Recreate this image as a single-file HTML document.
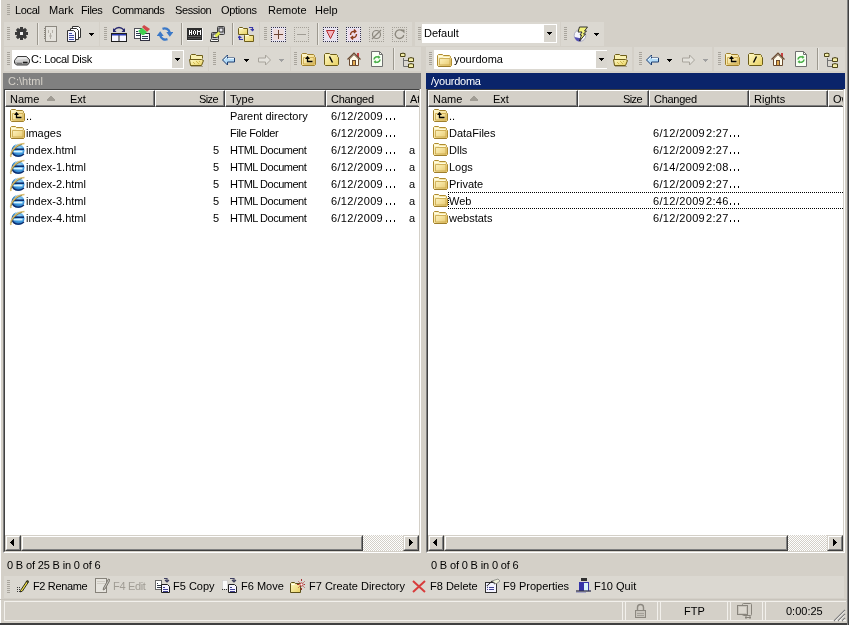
<!DOCTYPE html>
<html><head><meta charset="utf-8"><style>
html,body{margin:0;padding:0}
body{width:849px;height:625px;position:relative;overflow:hidden;background:#D4D0C8;font-family:"Liberation Sans",sans-serif;font-size:11px;color:#000}
body>div,body>svg{position:absolute}
.t{white-space:nowrap;line-height:13px;height:13px;will-change:transform}
</style></head><body>
<svg width="0" height="0" style="position:absolute;left:0;top:0">
<defs>
<linearGradient id="gfold" x1="0" y1="0" x2="1" y2="1"><stop offset="0" stop-color="#FFFBD8"/><stop offset="0.5" stop-color="#F6E4A0"/><stop offset="1" stop-color="#E4C468"/></linearGradient>
<linearGradient id="gfold2" x1="0" y1="0" x2="1" y2="1"><stop offset="0" stop-color="#FFFAC8"/><stop offset="1" stop-color="#E8D060"/></linearGradient>
<radialGradient id="gblue" cx="0.6" cy="0.35" r="0.7"><stop offset="0" stop-color="#9ED8FF"/><stop offset="0.6" stop-color="#3A96DA"/><stop offset="1" stop-color="#1A4C98"/></radialGradient>
<linearGradient id="ggray" x1="0" y1="0" x2="1" y2="1"><stop offset="0" stop-color="#F0F0F0"/><stop offset="1" stop-color="#707070"/></linearGradient>
</defs>
<symbol id="gear" viewBox="0 0 16 16">
<g fill="#3A3A3A" transform="translate(8.5 7.5)">
<circle r="5"/>
<rect x="-1.5" y="-6.5" width="3" height="13"/>
<rect x="-6.5" y="-1.5" width="13" height="3"/>
<rect x="-1.5" y="-6.5" width="3" height="13" transform="rotate(45)"/>
<rect x="-1.5" y="-6.5" width="3" height="13" transform="rotate(-45)"/>
</g>
<rect x="7" y="6" width="3" height="3" fill="#F0F0F0"/>
</symbol>
<symbol id="notebook" viewBox="0 0 16 16">
<rect x="3.5" y="0.5" width="11" height="15" fill="#E4E2DC" stroke="#8C8880"/>
<path d="M2 2.5h1M3 3.5h1M2 4.5h1M3 5.5h1M2 6.5h1M3 7.5h1M2 8.5h1M3 9.5h1M2 10.5h1M3 11.5h1M2 12.5h1M3 13.5h1" stroke="#8C8880"/>
<path d="M6.5 4v3M10.5 4v3M8.5 7v6M7 10h3" stroke="#B4B0A8" fill="none"/>
</symbol>
<symbol id="copydocs" viewBox="0 0 16 16">
<path d="M8.5 2.5h6l2 2v9h-8z" transform="translate(-1 -2)" fill="#fff" stroke="#333"/>
<path d="M5.5 2.5h6l2 2v9h-8z" fill="#fff" stroke="#333"/>
<path d="M2.5 4.5h6l2 2v9h-8z" fill="#F4F4FF" stroke="#333"/>
<path d="M4 9.5h5M4 11.5h5M4 13.5h5M4 7.5h3" stroke="#404CA8"/>
</symbol>
<symbol id="transfer" viewBox="0 0 16 16"><rect x="0.5" y="7.5" width="15" height="8" fill="#F6F6FF" stroke="#1E1E1E"/>
<path d="M8 7v9" stroke="#1E1E1E" stroke-width="1"/>
<rect x="1" y="8" width="14" height="1.5" fill="#2838B0"/>
<path d="M2 2v4h3.5z" fill="#26266E"/>
<path d="M14 2v4h-3.5z" fill="#26266E"/>
<path d="M3 4Q8 -1 13 4" stroke="#26266E" stroke-width="1.3" fill="none"/></symbol>
<symbol id="syncdoc" viewBox="0 0 16 16"><rect x="0.5" y="3.5" width="7" height="10" fill="#fff" stroke="#505058"/>
<path d="M2 6.5h2M2 8.5h4M2 10.5h4" stroke="#2C3C50"/>
<rect x="6.5" y="8.5" width="9" height="7" fill="#F8F8FF" stroke="#303040"/>
<path d="M8 11.5h6M8 13.5h6" stroke="#2C3C50"/>
<path d="M8 2l2-2 6 4-3 3z" fill="#D04848"/>
<path d="M4 6l4-3 5 4-3 3h-2z" fill="#40D050"/></symbol>
<symbol id="refresh" viewBox="0 0 16 16"><path d="M5.5 2.8C8.5 1.8 11.8 2.8 12.8 6.5" stroke="#3A78C8" stroke-width="2.3" fill="none"/>
<path d="M9.3 6h7l-3.5 4.8z" fill="#3A78C8"/>
<path d="M10.5 13.2C7.5 14.2 4.2 13.2 3.2 9.5" stroke="#3A78C8" stroke-width="2.3" fill="none"/>
<path d="M6.7 10h-7l3.5-4.8z" fill="#3A78C8"/></symbol>
<symbol id="hom" viewBox="0 0 16 16"><rect x="0" y="2" width="15" height="12" fill="#2C2C2C"/>
<path d="M0 14.5h16M15.5 2v13" stroke="#FAFAFA"/>
<g fill="#FFFFFF">
<rect x="2" y="4" width="1" height="5"/><rect x="4" y="4" width="1" height="5"/><rect x="3" y="6" width="1" height="1"/>
<rect x="6" y="5" width="1" height="3"/><rect x="8" y="5" width="1" height="3"/><rect x="7" y="4" width="1" height="1"/><rect x="7" y="8" width="1" height="1"/>
<rect x="10" y="4" width="1" height="5"/><rect x="13" y="4" width="1" height="5"/><rect x="11" y="5" width="1" height="1"/><rect x="12" y="5" width="1" height="1"/>
</g>
<rect x="1" y="10" width="13" height="1" fill="#5A5A5A"/><rect x="1" y="12" width="13" height="1" fill="#4A4A4A"/></symbol>
<symbol id="compkey" viewBox="0 0 16 16"><rect x="8.5" y="0.5" width="7" height="8" rx="1" fill="#C8C8D0" stroke="#3A3A3A"/>
<rect x="10" y="2" width="4" height="4" fill="#E8E8F0" stroke="#303030" stroke-width="1"/>
<rect x="2.5" y="6.5" width="7" height="7" rx="1" fill="#C8C8D0" stroke="#3A3A3A"/>
<rect x="4" y="8" width="4" height="3.5" fill="#E8E8F0" stroke="#303030" stroke-width="1"/>
<path d="M1.5 15.5h8M1.5 13.5v2M9.5 13.5v2" stroke="#3A3A3A" fill="none"/>
<rect x="2" y="14" width="7" height="1" fill="#F8F8F8"/>
<path d="M6.5 10.5l4-4" stroke="#E4EC50" stroke-width="2.6"/></symbol>
<symbol id="foldersync" viewBox="0 0 16 16"><path d="M0.5 8.5v-6l1-1h3l1 1h4v6z" fill="url(#gfold2)" stroke="#6C5C18"/>
<path d="M1.5 2.5h3" stroke="#FFFFF0"/>
<path d="M6.5 15.5v-6l1-1h3l1 1h4v6z" fill="url(#gfold2)" stroke="#6C5C18"/>
<path d="M7.5 9.5h3" stroke="#FFFFF0"/>
<path d="M11 1.5h3.5v2" stroke="#3838A8" stroke-width="1.2" fill="none"/><path d="M12 3h5l-2.5 2.5z" fill="#3838A8"/>
<path d="M5 13.5H1.5v-2" stroke="#3838A8" stroke-width="1.2" fill="none"/><path d="M-1 12h5l-2.5-2.5z" fill="#3838A8"/></symbol>
<symbol id="dotbox" viewBox="0 0 16 16"><rect x="1" y="1" width="15" height="15" fill="#E8E4F0"/><rect x="1" y="1" width="1" height="1" fill="#33334A"/><rect x="1" y="3" width="1" height="1" fill="#33334A"/><rect x="1" y="5" width="1" height="1" fill="#33334A"/><rect x="1" y="7" width="1" height="1" fill="#33334A"/><rect x="1" y="9" width="1" height="1" fill="#33334A"/><rect x="1" y="11" width="1" height="1" fill="#33334A"/><rect x="1" y="13" width="1" height="1" fill="#33334A"/><rect x="1" y="15" width="1" height="1" fill="#33334A"/><rect x="3" y="1" width="1" height="1" fill="#33334A"/><rect x="3" y="15" width="1" height="1" fill="#33334A"/><rect x="5" y="1" width="1" height="1" fill="#33334A"/><rect x="5" y="15" width="1" height="1" fill="#33334A"/><rect x="7" y="1" width="1" height="1" fill="#33334A"/><rect x="7" y="15" width="1" height="1" fill="#33334A"/><rect x="9" y="1" width="1" height="1" fill="#33334A"/><rect x="9" y="15" width="1" height="1" fill="#33334A"/><rect x="11" y="1" width="1" height="1" fill="#33334A"/><rect x="11" y="15" width="1" height="1" fill="#33334A"/><rect x="13" y="1" width="1" height="1" fill="#33334A"/><rect x="13" y="15" width="1" height="1" fill="#33334A"/><rect x="15" y="1" width="1" height="1" fill="#33334A"/><rect x="15" y="3" width="1" height="1" fill="#33334A"/><rect x="15" y="5" width="1" height="1" fill="#33334A"/><rect x="15" y="7" width="1" height="1" fill="#33334A"/><rect x="15" y="9" width="1" height="1" fill="#33334A"/><rect x="15" y="11" width="1" height="1" fill="#33334A"/><rect x="15" y="13" width="1" height="1" fill="#33334A"/><rect x="15" y="15" width="1" height="1" fill="#33334A"/></symbol>
<symbol id="dotboxg" viewBox="0 0 16 16"><rect x="1" y="1" width="1" height="1" fill="#A4A098"/><rect x="1" y="3" width="1" height="1" fill="#A4A098"/><rect x="1" y="5" width="1" height="1" fill="#A4A098"/><rect x="1" y="7" width="1" height="1" fill="#A4A098"/><rect x="1" y="9" width="1" height="1" fill="#A4A098"/><rect x="1" y="11" width="1" height="1" fill="#A4A098"/><rect x="1" y="13" width="1" height="1" fill="#A4A098"/><rect x="1" y="15" width="1" height="1" fill="#A4A098"/><rect x="3" y="1" width="1" height="1" fill="#A4A098"/><rect x="3" y="15" width="1" height="1" fill="#A4A098"/><rect x="5" y="1" width="1" height="1" fill="#A4A098"/><rect x="5" y="15" width="1" height="1" fill="#A4A098"/><rect x="7" y="1" width="1" height="1" fill="#A4A098"/><rect x="7" y="15" width="1" height="1" fill="#A4A098"/><rect x="9" y="1" width="1" height="1" fill="#A4A098"/><rect x="9" y="15" width="1" height="1" fill="#A4A098"/><rect x="11" y="1" width="1" height="1" fill="#A4A098"/><rect x="11" y="15" width="1" height="1" fill="#A4A098"/><rect x="13" y="1" width="1" height="1" fill="#A4A098"/><rect x="13" y="15" width="1" height="1" fill="#A4A098"/><rect x="15" y="1" width="1" height="1" fill="#A4A098"/><rect x="15" y="3" width="1" height="1" fill="#A4A098"/><rect x="15" y="5" width="1" height="1" fill="#A4A098"/><rect x="15" y="7" width="1" height="1" fill="#A4A098"/><rect x="15" y="9" width="1" height="1" fill="#A4A098"/><rect x="15" y="11" width="1" height="1" fill="#A4A098"/><rect x="15" y="13" width="1" height="1" fill="#A4A098"/><rect x="15" y="15" width="1" height="1" fill="#A4A098"/></symbol>
<symbol id="plus" viewBox="0 0 16 16"><use href="#dotbox"/><rect x="3" y="3" width="11" height="11" fill="#EEDCDC"/><path d="M4 8.5h9M8.5 4v9" stroke="#6E4434" stroke-width="1"/></symbol>
<symbol id="minus" viewBox="0 0 16 16"><use href="#dotboxg"/><path d="M4 8.5h9" stroke="#A09C94" stroke-width="1"/></symbol>
<symbol id="funnel" viewBox="0 0 16 16"><use href="#dotbox"/><path d="M4.5 4.5h8l-4 8z" fill="#F4B4C0" stroke="#B42C2C"/></symbol>
<symbol id="syncred" viewBox="0 0 16 16"><use href="#dotbox"/><rect x="3" y="3" width="11" height="11" fill="#F0DCEC"/><path d="M5.5 9C5.5 6 7.5 5 9.5 5.5M9 3.5l1.8 2-2 1.5M11.5 8C11.5 11 9.5 12 7.5 11.5M8 13.5l-1.8-2 2-1.5" stroke="#8C3C1C" stroke-width="1.4" fill="none"/></symbol>
<symbol id="nullsym" viewBox="0 0 16 16"><use href="#dotboxg"/><circle cx="8.5" cy="8.5" r="4" stroke="#8C887E" fill="none" stroke-width="1.2"/><path d="M4 13l9-9" stroke="#8C887E" stroke-width="1.2"/></symbol>
<symbol id="refreshgray" viewBox="0 0 16 16"><use href="#dotboxg"/><path d="M11.5 5A4.3 4.3 0 1 0 12.8 9" stroke="#8C887E" fill="none" stroke-width="1.3"/><path d="M9.5 3.5h4v4z" fill="#8C887E"/></symbol>
<symbol id="lightning" viewBox="0 0 16 16">
<circle cx="8" cy="9.5" r="5.8" fill="#F4F4FA" stroke="#A0A0B8" stroke-width="0.8"/>
<path d="M2.5 11a6 6 0 0 0 6 4.5l1-3z" fill="#5450B4"/>
<path d="M7.5 1h8l-3 4h2l-3 3h2l-6 7 2-6H8l2-3H6z" fill="#F2F27C" stroke="#202020" stroke-width="0.9" stroke-linejoin="round"/>
</symbol>
<symbol id="drive" viewBox="0 0 16 16"><path d="M0.5 10.5l3-4h9l3 3v3l-2 2.5h-11l-2-2z" fill="#A8A8A8" stroke="#3C3C3C"/>
<path d="M1.5 10l2.5-3h8l2.5 2.5z" fill="#E8E8E8"/>
<path d="M1 11h14" stroke="#F4F4F4"/>
<path d="M9 12.5h4.5" stroke="#1C1C1C" stroke-width="1.6"/>
<path d="M3 13.5h5" stroke="#707070"/></symbol>
<symbol id="folder" viewBox="0 0 16 16">
<path d="M1.5 13.5v-10l1-1h4l1 1h6l1 1v1l1 1v7l-1 1h-12z" fill="url(#gfold)" stroke="#B08C30"/>
<path d="M2.5 4.5h4l1 1h6" stroke="#FFFCE0" fill="none"/>
<path d="M3.5 6.5h10.5v6.5h-10.5z" fill="none" stroke="#C8A448" stroke-width="0.8"/>
<path d="M2 14.5h13" stroke="#8C7028" stroke-opacity="0.5"/>
</symbol>
<symbol id="openfolder" viewBox="0 0 16 16">
<path d="M2.5 14.5v-10l1-1h4l1 1h6v3" fill="#F8F0B0" stroke="#6C5C18"/>
<path d="M1.5 8.5h12l2 1-2 5h-11z" fill="url(#gfold2)" stroke="#6C5C18"/>
<path d="M3 15.5h12" stroke="#8C8060" stroke-opacity="0.6"/>
<path d="M5 11l2 2M8 10l3 3M11 10l1 1" stroke="#C8B040" stroke-width="0.8"/>
</symbol>
<symbol id="upfolder" viewBox="0 0 16 16">
<path d="M1.5 13.5v-10l1-1h4l1 1h6l1 1v1l1 1v7l-1 1h-12z" fill="url(#gfold)" stroke="#A0802C"/>
<path d="M3.5 6.5h10.5v6.5h-10.5z" fill="none" stroke="#C8A448" stroke-width="0.8"/>
<path d="M7.5 5.5v5h5" stroke="#000" stroke-width="1.3" fill="none"/>
<path d="M5 8l2.5-3 2.5 3z" fill="#000"/>
</symbol>
<symbol id="rootfolder" viewBox="0 0 16 16">
<path d="M1.5 13.5v-10l1-1h4l1 1h6l1 1v1l1 1v7l-1 1h-12z" fill="url(#gfold2)" stroke="#6C5C18"/>
<path d="M6.5 5.5l3 6" stroke="#000" stroke-width="1.4"/>
</symbol>
<symbol id="rootfolder2" viewBox="0 0 16 16"><path d="M1.5 13.5v-10l1-1h4l1 1h6l1 1v1l1 1v7l-1 1h-12z" fill="url(#gfold2)" stroke="#6C5C18"/><path d="M9.5 5.5l-3 6" stroke="#000" stroke-width="1.4"/></symbol>
<symbol id="home" viewBox="0 0 16 16"><rect x="11" y="2" width="2" height="4" fill="#C84040"/>
<path d="M1.5 8.5l6.5-6.5 6.5 6.5" stroke="#6A4A30" stroke-width="1.2" fill="none"/>
<path d="M3.5 8v6.5h9V8L8 3.5z" fill="#FFFBEA" stroke="#6A4A30"/>
<rect x="6.5" y="9.5" width="3" height="5" fill="#E4AC50" stroke="#6A4A30"/></symbol>
<symbol id="refreshdoc" viewBox="0 0 16 16">
<path d="M2.5 0.5h8l3 3v12h-11z" fill="#F8FFF4" stroke="#707070"/>
<path d="M10.5 0.5v3h3" stroke="#707070" fill="none"/>
<path d="M5 8.5a3 3 0 0 1 5-2M11 8.5a3 3 0 0 1-5 2" stroke="#48B048" stroke-width="1.6" fill="none"/>
<path d="M9 4.5l2.5 1.5-2 2zM7 12.5l-2.5-1.5 2-2z" fill="#48B048"/>
</symbol>
<symbol id="tree" viewBox="0 0 16 16"><path d="M1.5 1.5h2v-0.5h1v0.5h1.5v3h-4.5z" fill="#F4EEA8" stroke="#4C4418"/>
<path d="M9.5 6h2v-0.5h1v0.5h2v3.5h-5z" fill="#F4EEA8" stroke="#4C4418"/>
<path d="M9.5 12h2v-0.5h1v0.5h2v3.5h-5z" fill="#F4EEA8" stroke="#4C4418"/>
<path d="M4.5 6v8.5h4.5M4.5 8.5h4.5" stroke="#707070" fill="none"/></symbol>
<symbol id="back" viewBox="0 0 16 16">
<path d="M1.5 9l5-5v3h7v4h-7v3z" fill="#B4DCF8" stroke="#1C3C70" stroke-linejoin="miter"/>
<path d="M3 9l3.5-3.5M7 7.5h6" stroke="#E8F6FF"/>
</symbol>
<symbol id="fwd" viewBox="0 0 16 16">
<path d="M14.5 9l-5-5v3h-7v4h7v3z" fill="#E4E2DC" stroke="#A8A49C"/>
</symbol>
<symbol id="ie" viewBox="0 0 16 16"><circle cx="9" cy="8.5" r="6.5" fill="url(#gblue)"/>
<path d="M3.5 7.2h11.5" stroke="#0C2C6C" stroke-width="1.6"/>
<path d="M4.5 9.6h9" stroke="#D8F4FF" stroke-width="1.6"/>
<path d="M3.5 10.5c1 4 8 5 11.5 1.5" stroke="#0C2C6C" stroke-width="1.1" fill="none"/>
<path d="M6 3.5c2-2 6-2 8 1" stroke="#CDEBFF" stroke-width="1" fill="none"/>
<path d="M2 15C0.5 11 6 2 15.5 1.5" stroke="#D8BC70" stroke-width="1.7" fill="none"/>
<path d="M2.3 12.8C3 9 8 3.5 13 2.5" stroke="#7A6420" stroke-width="0.6" fill="none"/></symbol>
<symbol id="pencil" viewBox="0 0 16 16">
<path d="M4.5 13.5l6-9 1.5-1 0.5 1.5-6 9-2 1z" fill="#F2E040" stroke="#303020" stroke-linejoin="round"/>
<path d="M10 4l2 1.3" stroke="#303020" stroke-width="1.4"/>
<path d="M1 11h1M3 11h1M1 13h1M3 13h1M1 15h1M3 15h1" stroke="#383838" transform="translate(0 -0.5)"/>
</symbol>
<symbol id="editdoc" viewBox="0 0 16 16">
<rect x="1.5" y="1.5" width="11" height="14" fill="#E6E4DE" stroke="#86827A"/>
<path d="M3 4.5h8M3 6.5h8" stroke="#D0CCC4"/>
<path d="M9.5 11l5-9 1.5 1-5 9-1.8 1z" fill="#C8C6C0" stroke="#7A766E"/>
</symbol>
<symbol id="copydoc2" viewBox="0 0 16 16">
<rect x="1.5" y="3.5" width="6" height="9" fill="#fff" stroke="#6A6A6A"/>
<path d="M3 6.5h1M3 8.5h4M3 10.5h4" stroke="#303848"/>
<path d="M7.5 7.5h6l2 2v6h-8z" fill="#F6F4FF" stroke="#1E1E1E"/>
<path d="M9 10.5h2M9 12.5h5M9 14.5h5" stroke="#404090"/>
<path d="M10 1.5h3M13 1v3M11 3l2 2 2-2" stroke="#404060" stroke-width="1.2" fill="none"/>
</symbol>
<symbol id="movedoc" viewBox="0 0 16 16">
<path d="M1.5 3.5h5v9h-5z" fill="#FAFAFA" stroke="#C0C0C0" stroke-dasharray="1 1"/>
<path d="M1 12.5h1M3 12.5h1M5 12.5h1" stroke="#303030"/>
<path d="M7.5 7.5h6l2 2v6h-8z" fill="#F6F4FF" stroke="#1E1E1E"/>
<path d="M9 10.5h2M9 12.5h5M9 14.5h5" stroke="#404090"/>
<path d="M9 1.5h4M13 1v3M11 3l2 2 2-2" stroke="#404060" stroke-width="1.2" fill="none"/>
</symbol>
<symbol id="newdir" viewBox="0 0 16 16">
<path d="M1.5 15.5v-9l1-1h3l1 1h5v9z" fill="url(#gfold2)" stroke="#5C5018"/>
<path d="M2.5 7.5h3" stroke="#FFFFF0"/>
<path d="M12.5 2v2M12.5 11v2M8 7.5h2M15 7.5h2M9.5 4.5l1 1M15.5 4.5l-1 1M9.5 10.5l1-1M15.5 10.5l-1-1" stroke="#A83030" stroke-width="1"/>
<circle cx="12.5" cy="7.5" r="1.6" fill="#FFF0F0" stroke="#B83838" stroke-width="1"/>
</symbol>
<symbol id="delx" viewBox="0 0 16 16">
<path d="M2 4l12 11M14 4L2 15" stroke="#D83C3C" stroke-width="2"/>
</symbol>
<symbol id="props" viewBox="0 0 16 16">
<rect x="1.5" y="5.5" width="11" height="10" fill="#F4F4FF" stroke="#303030"/>
<path d="M3 10.5h1M5 10.5h5M3 12.5h1M5 12.5h5" stroke="#404090"/>
<path d="M3 9l5-5 3 3" stroke="#202020" stroke-width="1.2" fill="none" stroke-dasharray="1 0.5"/>
<path d="M8 4l6-2 2 2-4 3z" fill="#EEF0D8" stroke="#606060" stroke-width="0.6"/>
</symbol>
<symbol id="quit" viewBox="0 0 16 16">
<rect x="6" y="1" width="6" height="3" fill="#303030"/>
<rect x="4" y="5" width="10" height="9" fill="#3434A8"/>
<rect x="9" y="6" width="4" height="8" fill="#D8F4FA"/>
<path d="M1 14h16" stroke="#303050" stroke-width="1.3"/>
<path d="M1 15.5h10" stroke="#A8A8C8"/>
</symbol>
<symbol id="lock" viewBox="0 0 16 16"><path d="M5.5 8V5.5a3 3 0 0 1 6 0V8" stroke="#8C8880" stroke-width="1.4" fill="none"/><rect x="3.5" y="8.5" width="10" height="7" fill="#C8C4BC" stroke="#8C8880"/><path d="M5 11.5h7M5 13.5h7" stroke="#A4A098"/></symbol>
<symbol id="computer" viewBox="0 0 16 16">
<rect x="5.5" y="0.5" width="9" height="12" rx="1" fill="#D4D0C8" stroke="#88847C"/>
<rect x="0.5" y="2.5" width="10" height="9" fill="#C8C4BC" stroke="#88847C"/>
<rect x="2" y="4" width="7" height="6" fill="#DCD8D0"/>
<path d="M8 14.5h6M9 13v3M13 13v3" stroke="#88847C"/>
</symbol>
</svg>

<div style="left:0px;top:0px;width:1px;height:625px;background:#FFFFFF"></div>
<div style="left:7px;top:4px;width:3px;height:1px;background:#A8A49C"></div>
<div style="left:7px;top:6px;width:3px;height:1px;background:#A8A49C"></div>
<div style="left:7px;top:8px;width:3px;height:1px;background:#A8A49C"></div>
<div style="left:7px;top:10px;width:3px;height:1px;background:#A8A49C"></div>
<div style="left:7px;top:12px;width:3px;height:1px;background:#A8A49C"></div>
<div style="left:7px;top:14px;width:3px;height:1px;background:#A8A49C"></div>
<div class="t" style="left:15px;top:4px;letter-spacing:-0.35px;">Local</div>
<div class="t" style="left:49px;top:4px;">Mark</div>
<div class="t" style="left:81px;top:4px;letter-spacing:-0.35px;">Files</div>
<div class="t" style="left:112px;top:4px;letter-spacing:-0.5px;">Commands</div>
<div class="t" style="left:175px;top:4px;letter-spacing:-0.4px;">Session</div>
<div class="t" style="left:221px;top:4px;letter-spacing:-0.33px;">Options</div>
<div class="t" style="left:268px;top:4px;">Remote</div>
<div class="t" style="left:315px;top:4px;">Help</div>
<div style="left:4px;top:22px;width:95px;height:24px;background:#DBD8D1;"></div>
<div style="left:7px;top:27px;width:3px;height:1px;background:#A8A49C"></div>
<div style="left:7px;top:29px;width:3px;height:1px;background:#A8A49C"></div>
<div style="left:7px;top:31px;width:3px;height:1px;background:#A8A49C"></div>
<div style="left:7px;top:33px;width:3px;height:1px;background:#A8A49C"></div>
<div style="left:7px;top:35px;width:3px;height:1px;background:#A8A49C"></div>
<div style="left:7px;top:37px;width:3px;height:1px;background:#A8A49C"></div>
<div style="left:7px;top:39px;width:3px;height:1px;background:#A8A49C"></div>
<svg style="left:13px;top:26px" width="16" height="16" viewBox="0 0 16 16"><use href="#gear"/></svg>
<div style="left:37px;top:23px;width:1px;height:22px;background:#9C988F"></div>
<div style="left:38px;top:23px;width:1px;height:22px;background:#ECEAE5"></div>
<svg style="left:42px;top:26px" width="16" height="16" viewBox="0 0 16 16"><use href="#notebook"/></svg>
<svg style="left:65px;top:26px" width="16" height="16" viewBox="0 0 16 16"><use href="#copydocs"/></svg>
<svg style="left:89px;top:33px" width="5" height="3" viewBox="0 0 5 3"><path d="M0 0h5v1h-1v1h-1v1h-1v-1h-1v-1h-1z" fill="#000"/></svg>
<div style="left:100px;top:22px;width:159px;height:24px;background:#DBD8D1;"></div>
<div style="left:104px;top:27px;width:3px;height:1px;background:#A8A49C"></div>
<div style="left:104px;top:29px;width:3px;height:1px;background:#A8A49C"></div>
<div style="left:104px;top:31px;width:3px;height:1px;background:#A8A49C"></div>
<div style="left:104px;top:33px;width:3px;height:1px;background:#A8A49C"></div>
<div style="left:104px;top:35px;width:3px;height:1px;background:#A8A49C"></div>
<div style="left:104px;top:37px;width:3px;height:1px;background:#A8A49C"></div>
<div style="left:104px;top:39px;width:3px;height:1px;background:#A8A49C"></div>
<svg style="left:111px;top:26px" width="16" height="16" viewBox="0 0 16 16"><use href="#transfer"/></svg>
<svg style="left:134px;top:25px" width="16" height="16" viewBox="0 0 16 16"><use href="#syncdoc"/></svg>
<svg style="left:157px;top:26px" width="16" height="16" viewBox="0 0 16 16"><use href="#refresh"/></svg>
<div style="left:181px;top:23px;width:1px;height:22px;background:#9C988F"></div>
<div style="left:182px;top:23px;width:1px;height:22px;background:#ECEAE5"></div>
<svg style="left:187px;top:26px" width="16" height="16" viewBox="0 0 16 16"><use href="#hom"/></svg>
<svg style="left:209px;top:26px" width="16" height="16" viewBox="0 0 16 16"><use href="#compkey"/></svg>
<div style="left:232px;top:23px;width:1px;height:22px;background:#9C988F"></div>
<div style="left:233px;top:23px;width:1px;height:22px;background:#ECEAE5"></div>
<svg style="left:238px;top:26px" width="16" height="16" viewBox="0 0 16 16"><use href="#foldersync"/></svg>
<div style="left:260px;top:22px;width:152px;height:24px;background:#DBD8D1;"></div>
<div style="left:264px;top:27px;width:3px;height:1px;background:#A8A49C"></div>
<div style="left:264px;top:29px;width:3px;height:1px;background:#A8A49C"></div>
<div style="left:264px;top:31px;width:3px;height:1px;background:#A8A49C"></div>
<div style="left:264px;top:33px;width:3px;height:1px;background:#A8A49C"></div>
<div style="left:264px;top:35px;width:3px;height:1px;background:#A8A49C"></div>
<div style="left:264px;top:37px;width:3px;height:1px;background:#A8A49C"></div>
<div style="left:264px;top:39px;width:3px;height:1px;background:#A8A49C"></div>
<svg style="left:270px;top:26px" width="16" height="16" viewBox="0 0 16 16"><use href="#plus"/></svg>
<svg style="left:293px;top:26px" width="16" height="16" viewBox="0 0 16 16"><use href="#minus"/></svg>
<div style="left:317px;top:23px;width:1px;height:22px;background:#9C988F"></div>
<div style="left:318px;top:23px;width:1px;height:22px;background:#ECEAE5"></div>
<svg style="left:322px;top:26px" width="16" height="16" viewBox="0 0 16 16"><use href="#funnel"/></svg>
<svg style="left:345px;top:26px" width="16" height="16" viewBox="0 0 16 16"><use href="#syncred"/></svg>
<svg style="left:368px;top:26px" width="16" height="16" viewBox="0 0 16 16"><use href="#nullsym"/></svg>
<svg style="left:391px;top:26px" width="16" height="16" viewBox="0 0 16 16"><use href="#refreshgray"/></svg>
<div style="left:415px;top:22px;width:145px;height:24px;background:#DBD8D1;"></div>
<div style="left:418px;top:27px;width:3px;height:1px;background:#A8A49C"></div>
<div style="left:418px;top:29px;width:3px;height:1px;background:#A8A49C"></div>
<div style="left:418px;top:31px;width:3px;height:1px;background:#A8A49C"></div>
<div style="left:418px;top:33px;width:3px;height:1px;background:#A8A49C"></div>
<div style="left:418px;top:35px;width:3px;height:1px;background:#A8A49C"></div>
<div style="left:418px;top:37px;width:3px;height:1px;background:#A8A49C"></div>
<div style="left:418px;top:39px;width:3px;height:1px;background:#A8A49C"></div>
<div style="left:422px;top:24px;width:135px;height:19px;background:#FFFFFF"></div>
<div style="left:544px;top:25px;width:12px;height:17px;background:#D9D6CF"></div>
<svg style="left:547px;top:32px" width="5" height="3" viewBox="0 0 5 3"><path d="M0 0h5v1h-1v1h-1v1h-1v-1h-1v-1h-1z" fill="#000"/></svg>
<div class="t" style="left:424px;top:27px;">Default</div>
<div style="left:561px;top:22px;width:43px;height:24px;background:#DBD8D1;"></div>
<div style="left:564px;top:27px;width:3px;height:1px;background:#A8A49C"></div>
<div style="left:564px;top:29px;width:3px;height:1px;background:#A8A49C"></div>
<div style="left:564px;top:31px;width:3px;height:1px;background:#A8A49C"></div>
<div style="left:564px;top:33px;width:3px;height:1px;background:#A8A49C"></div>
<div style="left:564px;top:35px;width:3px;height:1px;background:#A8A49C"></div>
<div style="left:564px;top:37px;width:3px;height:1px;background:#A8A49C"></div>
<div style="left:564px;top:39px;width:3px;height:1px;background:#A8A49C"></div>
<svg style="left:572px;top:26px" width="16" height="16" viewBox="0 0 16 16"><use href="#lightning"/></svg>
<svg style="left:594px;top:33px" width="5" height="3" viewBox="0 0 5 3"><path d="M0 0h5v1h-1v1h-1v1h-1v-1h-1v-1h-1z" fill="#000"/></svg>
<div style="left:4px;top:47px;width:204px;height:24px;background:#DBD8D1;"></div>
<div style="left:7px;top:52px;width:3px;height:1px;background:#A8A49C"></div>
<div style="left:7px;top:54px;width:3px;height:1px;background:#A8A49C"></div>
<div style="left:7px;top:56px;width:3px;height:1px;background:#A8A49C"></div>
<div style="left:7px;top:58px;width:3px;height:1px;background:#A8A49C"></div>
<div style="left:7px;top:60px;width:3px;height:1px;background:#A8A49C"></div>
<div style="left:7px;top:62px;width:3px;height:1px;background:#A8A49C"></div>
<div style="left:7px;top:64px;width:3px;height:1px;background:#A8A49C"></div>
<div style="left:12px;top:50px;width:172px;height:19px;background:#FFFFFF"></div>
<div style="left:172px;top:51px;width:11px;height:17px;background:#D9D6CF"></div>
<svg style="left:175px;top:58px" width="5" height="3" viewBox="0 0 5 3"><path d="M0 0h5v1h-1v1h-1v1h-1v-1h-1v-1h-1z" fill="#000"/></svg>
<svg style="left:14px;top:50px" width="16" height="16" viewBox="0 0 16 16"><use href="#drive"/></svg>
<div class="t" style="left:31px;top:53px;letter-spacing:-0.3px;">C: Local Disk</div>
<svg style="left:188px;top:51px" width="16" height="16" viewBox="0 0 16 16"><use href="#openfolder"/></svg>
<div style="left:209px;top:47px;width:81px;height:24px;background:#DBD8D1;"></div>
<div style="left:213px;top:52px;width:3px;height:1px;background:#A8A49C"></div>
<div style="left:213px;top:54px;width:3px;height:1px;background:#A8A49C"></div>
<div style="left:213px;top:56px;width:3px;height:1px;background:#A8A49C"></div>
<div style="left:213px;top:58px;width:3px;height:1px;background:#A8A49C"></div>
<div style="left:213px;top:60px;width:3px;height:1px;background:#A8A49C"></div>
<div style="left:213px;top:62px;width:3px;height:1px;background:#A8A49C"></div>
<div style="left:213px;top:64px;width:3px;height:1px;background:#A8A49C"></div>
<svg style="left:221px;top:51px" width="16" height="16" viewBox="0 0 16 16"><use href="#back"/></svg>
<svg style="left:244px;top:59px" width="5" height="3" viewBox="0 0 5 3"><path d="M0 0h5v1h-1v1h-1v1h-1v-1h-1v-1h-1z" fill="#000"/></svg>
<svg style="left:256px;top:51px" width="16" height="16" viewBox="0 0 16 16"><use href="#fwd"/></svg>
<svg style="left:279px;top:59px" width="5" height="3" viewBox="0 0 5 3"><path d="M0 0h5v1h-1v1h-1v1h-1v-1h-1v-1h-1z" fill="#A0A0A0"/></svg>
<div style="left:291px;top:47px;width:130px;height:24px;background:#DBD8D1;"></div>
<div style="left:294px;top:52px;width:3px;height:1px;background:#A8A49C"></div>
<div style="left:294px;top:54px;width:3px;height:1px;background:#A8A49C"></div>
<div style="left:294px;top:56px;width:3px;height:1px;background:#A8A49C"></div>
<div style="left:294px;top:58px;width:3px;height:1px;background:#A8A49C"></div>
<div style="left:294px;top:60px;width:3px;height:1px;background:#A8A49C"></div>
<div style="left:294px;top:62px;width:3px;height:1px;background:#A8A49C"></div>
<div style="left:294px;top:64px;width:3px;height:1px;background:#A8A49C"></div>
<svg style="left:300px;top:51px" width="16" height="16" viewBox="0 0 16 16"><use href="#upfolder"/></svg>
<svg style="left:323px;top:51px" width="16" height="16" viewBox="0 0 16 16"><use href="#rootfolder"/></svg>
<svg style="left:346px;top:51px" width="16" height="16" viewBox="0 0 16 16"><use href="#home"/></svg>
<svg style="left:369px;top:51px" width="16" height="16" viewBox="0 0 16 16"><use href="#refreshdoc"/></svg>
<div style="left:393px;top:48px;width:1px;height:22px;background:#9C988F"></div>
<div style="left:394px;top:48px;width:1px;height:22px;background:#ECEAE5"></div>
<svg style="left:399px;top:52px" width="16" height="16" viewBox="0 0 16 16"><use href="#tree"/></svg>
<div style="left:426px;top:47px;width:206px;height:24px;background:#DBD8D1;"></div>
<div style="left:429px;top:52px;width:3px;height:1px;background:#A8A49C"></div>
<div style="left:429px;top:54px;width:3px;height:1px;background:#A8A49C"></div>
<div style="left:429px;top:56px;width:3px;height:1px;background:#A8A49C"></div>
<div style="left:429px;top:58px;width:3px;height:1px;background:#A8A49C"></div>
<div style="left:429px;top:60px;width:3px;height:1px;background:#A8A49C"></div>
<div style="left:429px;top:62px;width:3px;height:1px;background:#A8A49C"></div>
<div style="left:429px;top:64px;width:3px;height:1px;background:#A8A49C"></div>
<div style="left:434px;top:50px;width:173px;height:19px;background:#FFFFFF"></div>
<div style="left:596px;top:51px;width:11px;height:17px;background:#D9D6CF"></div>
<svg style="left:599px;top:58px" width="5" height="3" viewBox="0 0 5 3"><path d="M0 0h5v1h-1v1h-1v1h-1v-1h-1v-1h-1z" fill="#000"/></svg>
<svg style="left:436px;top:52px" width="16" height="16" viewBox="0 0 16 16"><use href="#folder"/></svg>
<div class="t" style="left:454px;top:53px;">yourdoma</div>
<svg style="left:612px;top:51px" width="16" height="16" viewBox="0 0 16 16"><use href="#openfolder"/></svg>
<div style="left:634px;top:47px;width:78px;height:24px;background:#DBD8D1;"></div>
<div style="left:639px;top:52px;width:3px;height:1px;background:#A8A49C"></div>
<div style="left:639px;top:54px;width:3px;height:1px;background:#A8A49C"></div>
<div style="left:639px;top:56px;width:3px;height:1px;background:#A8A49C"></div>
<div style="left:639px;top:58px;width:3px;height:1px;background:#A8A49C"></div>
<div style="left:639px;top:60px;width:3px;height:1px;background:#A8A49C"></div>
<div style="left:639px;top:62px;width:3px;height:1px;background:#A8A49C"></div>
<div style="left:639px;top:64px;width:3px;height:1px;background:#A8A49C"></div>
<svg style="left:645px;top:51px" width="16" height="16" viewBox="0 0 16 16"><use href="#back"/></svg>
<svg style="left:667px;top:59px" width="5" height="3" viewBox="0 0 5 3"><path d="M0 0h5v1h-1v1h-1v1h-1v-1h-1v-1h-1z" fill="#000"/></svg>
<svg style="left:680px;top:51px" width="16" height="16" viewBox="0 0 16 16"><use href="#fwd"/></svg>
<svg style="left:703px;top:59px" width="5" height="3" viewBox="0 0 5 3"><path d="M0 0h5v1h-1v1h-1v1h-1v-1h-1v-1h-1z" fill="#A0A0A0"/></svg>
<div style="left:714px;top:47px;width:131px;height:24px;background:#DBD8D1;"></div>
<div style="left:718px;top:52px;width:3px;height:1px;background:#A8A49C"></div>
<div style="left:718px;top:54px;width:3px;height:1px;background:#A8A49C"></div>
<div style="left:718px;top:56px;width:3px;height:1px;background:#A8A49C"></div>
<div style="left:718px;top:58px;width:3px;height:1px;background:#A8A49C"></div>
<div style="left:718px;top:60px;width:3px;height:1px;background:#A8A49C"></div>
<div style="left:718px;top:62px;width:3px;height:1px;background:#A8A49C"></div>
<div style="left:718px;top:64px;width:3px;height:1px;background:#A8A49C"></div>
<svg style="left:724px;top:51px" width="16" height="16" viewBox="0 0 16 16"><use href="#upfolder"/></svg>
<svg style="left:747px;top:51px" width="16" height="16" viewBox="0 0 16 16"><use href="#rootfolder2"/></svg>
<svg style="left:770px;top:51px" width="16" height="16" viewBox="0 0 16 16"><use href="#home"/></svg>
<svg style="left:793px;top:51px" width="16" height="16" viewBox="0 0 16 16"><use href="#refreshdoc"/></svg>
<div style="left:817px;top:48px;width:1px;height:22px;background:#9C988F"></div>
<div style="left:818px;top:48px;width:1px;height:22px;background:#ECEAE5"></div>
<svg style="left:823px;top:52px" width="16" height="16" viewBox="0 0 16 16"><use href="#tree"/></svg>
<div style="left:3px;top:88px;width:418px;height:465px;background:#FFFFFF;border-top:1px solid #808080;border-left:1px solid #808080;border-right:1px solid #FFFFFF;border-bottom:1px solid #FFFFFF;box-sizing:border-box"></div>
<div style="left:4px;top:89px;width:416px;height:463px;border-top:1px solid #404040;border-left:1px solid #404040;border-right:1px solid #D4D0C8;border-bottom:1px solid #D4D0C8;box-sizing:border-box"></div>
<div style="left:3px;top:73px;width:418px;height:16px;background:#808080"></div>
<div class="t" style="left:8px;top:75px;color:#D4D0C8">C:\html</div>
<div style="left:5px;top:90px;width:150px;height:17px;background:#D4D0C8;border-top:1px solid #FFF;border-left:1px solid #FFF;border-right:1px solid #404040;border-bottom:1px solid #404040;box-sizing:border-box;overflow:hidden"></div>
<div style="left:6px;top:91px;width:148px;height:15px;border-right:1px solid #808080;border-bottom:1px solid #808080;box-sizing:border-box"></div>
<div class="t" style="left:10px;top:93px;width:409px;overflow:hidden;">Name</div>
<svg style="left:47px;top:96px" width="8" height="5" viewBox="0 0 8 5"><path d="M3 0h2v1h1v1h1v1h1v2H0V3h1V2h1V1h1z" fill="#A09C94"/></svg>
<div style="left:155px;top:90px;width:70px;height:17px;background:#D4D0C8;border-top:1px solid #FFF;border-left:1px solid #FFF;border-right:1px solid #404040;border-bottom:1px solid #404040;box-sizing:border-box;overflow:hidden"></div>
<div style="left:156px;top:91px;width:68px;height:15px;border-right:1px solid #808080;border-bottom:1px solid #808080;box-sizing:border-box"></div>
<div class="t" style="right:631px;top:93px;letter-spacing:-0.6px;">Size</div>
<div style="left:225px;top:90px;width:101px;height:17px;background:#D4D0C8;border-top:1px solid #FFF;border-left:1px solid #FFF;border-right:1px solid #404040;border-bottom:1px solid #404040;box-sizing:border-box;overflow:hidden"></div>
<div style="left:226px;top:91px;width:99px;height:15px;border-right:1px solid #808080;border-bottom:1px solid #808080;box-sizing:border-box"></div>
<div class="t" style="left:230px;top:93px;width:189px;overflow:hidden;">Type</div>
<div style="left:326px;top:90px;width:79px;height:17px;background:#D4D0C8;border-top:1px solid #FFF;border-left:1px solid #FFF;border-right:1px solid #404040;border-bottom:1px solid #404040;box-sizing:border-box;overflow:hidden"></div>
<div style="left:327px;top:91px;width:77px;height:15px;border-right:1px solid #808080;border-bottom:1px solid #808080;box-sizing:border-box"></div>
<div class="t" style="left:331px;top:93px;width:88px;overflow:hidden;letter-spacing:-0.27px;">Changed</div>
<div style="left:405px;top:90px;width:14px;height:17px;background:#D4D0C8;border-top:1px solid #FFF;border-left:1px solid #FFF;border-bottom:1px solid #404040;box-sizing:border-box;overflow:hidden"></div>
<div style="left:406px;top:91px;width:12px;height:15px;border-bottom:1px solid #808080;box-sizing:border-box"></div>
<div class="t" style="left:410px;top:93px;width:9px;overflow:hidden;">Attr</div>
<svg style="left:9px;top:107px" width="16" height="16" viewBox="0 0 16 16"><use href="#upfolder"/></svg>
<div class="t" style="left:26px;top:110px;">..</div>
<div class="t" style="left:230px;top:110px;">Parent directory</div>
<div class="t" style="left:331px;top:110px;letter-spacing:0.35px">6/12/2009</div>
<div style="left:386px;top:118px;width:1px;height:2px;background:#000"></div>
<div style="left:390px;top:118px;width:1px;height:2px;background:#000"></div>
<div style="left:394px;top:118px;width:1px;height:2px;background:#000"></div>
<svg style="left:9px;top:124px" width="16" height="16" viewBox="0 0 16 16"><use href="#folder"/></svg>
<div class="t" style="left:26px;top:127px;">images</div>
<div class="t" style="left:230px;top:127px;letter-spacing:-0.32px;">File Folder</div>
<div class="t" style="left:331px;top:127px;letter-spacing:0.35px">6/12/2009</div>
<div style="left:386px;top:135px;width:1px;height:2px;background:#000"></div>
<div style="left:390px;top:135px;width:1px;height:2px;background:#000"></div>
<div style="left:394px;top:135px;width:1px;height:2px;background:#000"></div>
<svg style="left:9px;top:142px" width="16" height="16" viewBox="0 0 16 16"><use href="#ie"/></svg>
<div class="t" style="left:26px;top:144px;">index.html</div>
<div class="t" style="right:630px;top:144px;">5</div>
<div class="t" style="left:230px;top:144px;letter-spacing:-0.5px;">HTML Document</div>
<div class="t" style="left:331px;top:144px;letter-spacing:0.35px">6/12/2009</div>
<div style="left:386px;top:152px;width:1px;height:2px;background:#000"></div>
<div style="left:390px;top:152px;width:1px;height:2px;background:#000"></div>
<div style="left:394px;top:152px;width:1px;height:2px;background:#000"></div>
<div class="t" style="left:409px;top:144px;">a</div>
<svg style="left:9px;top:159px" width="16" height="16" viewBox="0 0 16 16"><use href="#ie"/></svg>
<div class="t" style="left:26px;top:161px;">index-1.html</div>
<div class="t" style="right:630px;top:161px;">5</div>
<div class="t" style="left:230px;top:161px;letter-spacing:-0.5px;">HTML Document</div>
<div class="t" style="left:331px;top:161px;letter-spacing:0.35px">6/12/2009</div>
<div style="left:386px;top:169px;width:1px;height:2px;background:#000"></div>
<div style="left:390px;top:169px;width:1px;height:2px;background:#000"></div>
<div style="left:394px;top:169px;width:1px;height:2px;background:#000"></div>
<div class="t" style="left:409px;top:161px;">a</div>
<svg style="left:9px;top:176px" width="16" height="16" viewBox="0 0 16 16"><use href="#ie"/></svg>
<div class="t" style="left:26px;top:178px;">index-2.html</div>
<div class="t" style="right:630px;top:178px;">5</div>
<div class="t" style="left:230px;top:178px;letter-spacing:-0.5px;">HTML Document</div>
<div class="t" style="left:331px;top:178px;letter-spacing:0.35px">6/12/2009</div>
<div style="left:386px;top:186px;width:1px;height:2px;background:#000"></div>
<div style="left:390px;top:186px;width:1px;height:2px;background:#000"></div>
<div style="left:394px;top:186px;width:1px;height:2px;background:#000"></div>
<div class="t" style="left:409px;top:178px;">a</div>
<svg style="left:9px;top:193px" width="16" height="16" viewBox="0 0 16 16"><use href="#ie"/></svg>
<div class="t" style="left:26px;top:195px;">index-3.html</div>
<div class="t" style="right:630px;top:195px;">5</div>
<div class="t" style="left:230px;top:195px;letter-spacing:-0.5px;">HTML Document</div>
<div class="t" style="left:331px;top:195px;letter-spacing:0.35px">6/12/2009</div>
<div style="left:386px;top:203px;width:1px;height:2px;background:#000"></div>
<div style="left:390px;top:203px;width:1px;height:2px;background:#000"></div>
<div style="left:394px;top:203px;width:1px;height:2px;background:#000"></div>
<div class="t" style="left:409px;top:195px;">a</div>
<svg style="left:9px;top:210px" width="16" height="16" viewBox="0 0 16 16"><use href="#ie"/></svg>
<div class="t" style="left:26px;top:212px;">index-4.html</div>
<div class="t" style="right:630px;top:212px;">5</div>
<div class="t" style="left:230px;top:212px;letter-spacing:-0.5px;">HTML Document</div>
<div class="t" style="left:331px;top:212px;letter-spacing:0.35px">6/12/2009</div>
<div style="left:386px;top:220px;width:1px;height:2px;background:#000"></div>
<div style="left:390px;top:220px;width:1px;height:2px;background:#000"></div>
<div style="left:394px;top:220px;width:1px;height:2px;background:#000"></div>
<div class="t" style="left:409px;top:212px;">a</div>
<div style="left:5px;top:535px;width:414px;height:16px;background-image:repeating-conic-gradient(#FFFFFF 0 25%, #D4D0C8 0 50%);background-size:2px 2px"></div>
<div style="left:5px;top:535px;width:16px;height:16px;background:#D4D0C8;border-top:1px solid #D4D0C8;border-left:1px solid #D4D0C8;border-right:1px solid #404040;border-bottom:1px solid #404040;box-sizing:border-box"></div>
<div style="left:6px;top:536px;width:14px;height:14px;border-top:1px solid #FFF;border-left:1px solid #FFF;border-right:1px solid #808080;border-bottom:1px solid #808080;box-sizing:border-box"></div>
<svg style="left:10px;top:539px" width="4" height="7" viewBox="0 0 4 7"><path d="M3 0h1v7h-1v-1h-1v-1h-1v-1h-1v-1h1v-1h1v-1h1z" fill="#000"/></svg>
<div style="left:21px;top:535px;width:342px;height:16px;background:#D4D0C8;border-top:1px solid #D4D0C8;border-left:1px solid #D4D0C8;border-right:1px solid #404040;border-bottom:1px solid #404040;box-sizing:border-box"></div>
<div style="left:22px;top:536px;width:340px;height:14px;border-top:1px solid #FFF;border-left:1px solid #FFF;border-right:1px solid #808080;border-bottom:1px solid #808080;box-sizing:border-box"></div>
<div style="left:403px;top:535px;width:16px;height:16px;background:#D4D0C8;border-top:1px solid #D4D0C8;border-left:1px solid #D4D0C8;border-right:1px solid #404040;border-bottom:1px solid #404040;box-sizing:border-box"></div>
<div style="left:404px;top:536px;width:14px;height:14px;border-top:1px solid #FFF;border-left:1px solid #FFF;border-right:1px solid #808080;border-bottom:1px solid #808080;box-sizing:border-box"></div>
<svg style="left:409px;top:539px" width="4" height="7" viewBox="0 0 4 7"><path d="M0 0h1v1h1v1h1v1h1v1h-1v1h-1v1h-1v1h-1z" fill="#000"/></svg>
<div class="t" style="left:70px;top:93px;">Ext</div>
<div style="left:426px;top:88px;width:419px;height:465px;background:#FFFFFF;border-top:1px solid #808080;border-left:1px solid #808080;border-right:1px solid #FFFFFF;border-bottom:1px solid #FFFFFF;box-sizing:border-box"></div>
<div style="left:427px;top:89px;width:417px;height:463px;border-top:1px solid #404040;border-left:1px solid #404040;border-right:1px solid #D4D0C8;border-bottom:1px solid #D4D0C8;box-sizing:border-box"></div>
<div style="left:426px;top:73px;width:419px;height:16px;background:#0A246A"></div>
<div class="t" style="left:431px;top:75px;letter-spacing:-0.25px;color:#FFFFFF">/yourdoma</div>
<div style="left:428px;top:90px;width:150px;height:17px;background:#D4D0C8;border-top:1px solid #FFF;border-left:1px solid #FFF;border-right:1px solid #404040;border-bottom:1px solid #404040;box-sizing:border-box;overflow:hidden"></div>
<div style="left:429px;top:91px;width:148px;height:15px;border-right:1px solid #808080;border-bottom:1px solid #808080;box-sizing:border-box"></div>
<div class="t" style="left:433px;top:93px;width:410px;overflow:hidden;">Name</div>
<svg style="left:470px;top:96px" width="8" height="5" viewBox="0 0 8 5"><path d="M3 0h2v1h1v1h1v1h1v2H0V3h1V2h1V1h1z" fill="#A09C94"/></svg>
<div style="left:578px;top:90px;width:71px;height:17px;background:#D4D0C8;border-top:1px solid #FFF;border-left:1px solid #FFF;border-right:1px solid #404040;border-bottom:1px solid #404040;box-sizing:border-box;overflow:hidden"></div>
<div style="left:579px;top:91px;width:69px;height:15px;border-right:1px solid #808080;border-bottom:1px solid #808080;box-sizing:border-box"></div>
<div class="t" style="right:207px;top:93px;letter-spacing:-0.6px;">Size</div>
<div style="left:649px;top:90px;width:100px;height:17px;background:#D4D0C8;border-top:1px solid #FFF;border-left:1px solid #FFF;border-right:1px solid #404040;border-bottom:1px solid #404040;box-sizing:border-box;overflow:hidden"></div>
<div style="left:650px;top:91px;width:98px;height:15px;border-right:1px solid #808080;border-bottom:1px solid #808080;box-sizing:border-box"></div>
<div class="t" style="left:654px;top:93px;width:189px;overflow:hidden;letter-spacing:-0.27px;">Changed</div>
<div style="left:749px;top:90px;width:79px;height:17px;background:#D4D0C8;border-top:1px solid #FFF;border-left:1px solid #FFF;border-right:1px solid #404040;border-bottom:1px solid #404040;box-sizing:border-box;overflow:hidden"></div>
<div style="left:750px;top:91px;width:77px;height:15px;border-right:1px solid #808080;border-bottom:1px solid #808080;box-sizing:border-box"></div>
<div class="t" style="left:754px;top:93px;width:89px;overflow:hidden;">Rights</div>
<div style="left:828px;top:90px;width:15px;height:17px;background:#D4D0C8;border-top:1px solid #FFF;border-left:1px solid #FFF;border-bottom:1px solid #404040;box-sizing:border-box;overflow:hidden"></div>
<div style="left:829px;top:91px;width:13px;height:15px;border-bottom:1px solid #808080;box-sizing:border-box"></div>
<div class="t" style="left:833px;top:93px;width:10px;overflow:hidden;">Owner</div>
<svg style="left:432px;top:107px" width="16" height="16" viewBox="0 0 16 16"><use href="#upfolder"/></svg>
<div class="t" style="left:449px;top:110px;">..</div>
<svg style="left:432px;top:124px" width="16" height="16" viewBox="0 0 16 16"><use href="#folder"/></svg>
<div class="t" style="left:449px;top:127px;">DataFiles</div>
<div class="t" style="left:653px;top:127px;letter-spacing:0.35px">6/12/2009</div>
<div class="t" style="left:706px;top:127px;letter-spacing:0.3px">2:27</div>
<div style="left:730px;top:135px;width:1px;height:2px;background:#000"></div>
<div style="left:734px;top:135px;width:1px;height:2px;background:#000"></div>
<div style="left:738px;top:135px;width:1px;height:2px;background:#000"></div>
<svg style="left:432px;top:141px" width="16" height="16" viewBox="0 0 16 16"><use href="#folder"/></svg>
<div class="t" style="left:449px;top:144px;">Dlls</div>
<div class="t" style="left:653px;top:144px;letter-spacing:0.35px">6/12/2009</div>
<div class="t" style="left:706px;top:144px;letter-spacing:0.3px">2:27</div>
<div style="left:730px;top:152px;width:1px;height:2px;background:#000"></div>
<div style="left:734px;top:152px;width:1px;height:2px;background:#000"></div>
<div style="left:738px;top:152px;width:1px;height:2px;background:#000"></div>
<svg style="left:432px;top:158px" width="16" height="16" viewBox="0 0 16 16"><use href="#folder"/></svg>
<div class="t" style="left:449px;top:161px;">Logs</div>
<div class="t" style="left:653px;top:161px;letter-spacing:0.35px">6/14/2009</div>
<div class="t" style="left:706px;top:161px;letter-spacing:0.3px">2:08</div>
<div style="left:730px;top:169px;width:1px;height:2px;background:#000"></div>
<div style="left:734px;top:169px;width:1px;height:2px;background:#000"></div>
<div style="left:738px;top:169px;width:1px;height:2px;background:#000"></div>
<svg style="left:432px;top:175px" width="16" height="16" viewBox="0 0 16 16"><use href="#folder"/></svg>
<div class="t" style="left:449px;top:178px;">Private</div>
<div class="t" style="left:653px;top:178px;letter-spacing:0.35px">6/12/2009</div>
<div class="t" style="left:706px;top:178px;letter-spacing:0.3px">2:27</div>
<div style="left:730px;top:186px;width:1px;height:2px;background:#000"></div>
<div style="left:734px;top:186px;width:1px;height:2px;background:#000"></div>
<div style="left:738px;top:186px;width:1px;height:2px;background:#000"></div>
<svg style="left:432px;top:192px" width="16" height="16" viewBox="0 0 16 16"><use href="#folder"/></svg>
<div class="t" style="left:449px;top:195px;">Web</div>
<div class="t" style="left:653px;top:195px;letter-spacing:0.35px">6/12/2009</div>
<div class="t" style="left:706px;top:195px;letter-spacing:0.3px">2:46</div>
<div style="left:730px;top:203px;width:1px;height:2px;background:#000"></div>
<div style="left:734px;top:203px;width:1px;height:2px;background:#000"></div>
<div style="left:738px;top:203px;width:1px;height:2px;background:#000"></div>
<svg style="left:432px;top:209px" width="16" height="16" viewBox="0 0 16 16"><use href="#folder"/></svg>
<div class="t" style="left:449px;top:212px;">webstats</div>
<div class="t" style="left:653px;top:212px;letter-spacing:0.35px">6/12/2009</div>
<div class="t" style="left:706px;top:212px;letter-spacing:0.3px">2:27</div>
<div style="left:730px;top:220px;width:1px;height:2px;background:#000"></div>
<div style="left:734px;top:220px;width:1px;height:2px;background:#000"></div>
<div style="left:738px;top:220px;width:1px;height:2px;background:#000"></div>
<div style="left:428px;top:535px;width:415px;height:16px;background-image:repeating-conic-gradient(#FFFFFF 0 25%, #D4D0C8 0 50%);background-size:2px 2px"></div>
<div style="left:428px;top:535px;width:16px;height:16px;background:#D4D0C8;border-top:1px solid #D4D0C8;border-left:1px solid #D4D0C8;border-right:1px solid #404040;border-bottom:1px solid #404040;box-sizing:border-box"></div>
<div style="left:429px;top:536px;width:14px;height:14px;border-top:1px solid #FFF;border-left:1px solid #FFF;border-right:1px solid #808080;border-bottom:1px solid #808080;box-sizing:border-box"></div>
<svg style="left:433px;top:539px" width="4" height="7" viewBox="0 0 4 7"><path d="M3 0h1v7h-1v-1h-1v-1h-1v-1h-1v-1h1v-1h1v-1h1z" fill="#000"/></svg>
<div style="left:444px;top:535px;width:344px;height:16px;background:#D4D0C8;border-top:1px solid #D4D0C8;border-left:1px solid #D4D0C8;border-right:1px solid #404040;border-bottom:1px solid #404040;box-sizing:border-box"></div>
<div style="left:445px;top:536px;width:342px;height:14px;border-top:1px solid #FFF;border-left:1px solid #FFF;border-right:1px solid #808080;border-bottom:1px solid #808080;box-sizing:border-box"></div>
<div style="left:827px;top:535px;width:16px;height:16px;background:#D4D0C8;border-top:1px solid #D4D0C8;border-left:1px solid #D4D0C8;border-right:1px solid #404040;border-bottom:1px solid #404040;box-sizing:border-box"></div>
<div style="left:828px;top:536px;width:14px;height:14px;border-top:1px solid #FFF;border-left:1px solid #FFF;border-right:1px solid #808080;border-bottom:1px solid #808080;box-sizing:border-box"></div>
<svg style="left:833px;top:539px" width="4" height="7" viewBox="0 0 4 7"><path d="M0 0h1v1h1v1h1v1h1v1h-1v1h-1v1h-1v1h-1z" fill="#000"/></svg>
<div class="t" style="left:493px;top:93px;">Ext</div>
<div style="left:448px;top:192px;width:395px;height:17px;border:1px dotted #000;border-right:none;box-sizing:border-box"></div>
<div class="t" style="left:7px;top:559px;letter-spacing:-0.15px;">0 B of 25 B in 0 of 6</div>
<div class="t" style="left:431px;top:559px;letter-spacing:-0.15px;">0 B of 0 B in 0 of 6</div>
<div style="left:4px;top:576px;width:840px;height:22px;background:#DBD8D1;"></div>
<div style="left:7px;top:580px;width:3px;height:1px;background:#A8A49C"></div>
<div style="left:7px;top:582px;width:3px;height:1px;background:#A8A49C"></div>
<div style="left:7px;top:584px;width:3px;height:1px;background:#A8A49C"></div>
<div style="left:7px;top:586px;width:3px;height:1px;background:#A8A49C"></div>
<div style="left:7px;top:588px;width:3px;height:1px;background:#A8A49C"></div>
<div style="left:7px;top:590px;width:3px;height:1px;background:#A8A49C"></div>
<div style="left:7px;top:592px;width:3px;height:1px;background:#A8A49C"></div>
<svg style="left:16px;top:577px" width="16" height="16" viewBox="0 0 16 16"><use href="#pencil"/></svg>
<div class="t" style="left:33px;top:580px;letter-spacing:-0.36px;">F2 Rename</div>
<svg style="left:94px;top:577px" width="16" height="16" viewBox="0 0 16 16"><use href="#editdoc"/></svg>
<div class="t" style="left:113px;top:580px;letter-spacing:-0.33px;color:#A09C94">F4 Edit</div>
<svg style="left:154px;top:577px" width="16" height="16" viewBox="0 0 16 16"><use href="#copydoc2"/></svg>
<div class="t" style="left:173px;top:580px;">F5 Copy</div>
<svg style="left:221px;top:577px" width="16" height="16" viewBox="0 0 16 16"><use href="#movedoc"/></svg>
<div class="t" style="left:241px;top:580px;">F6 Move</div>
<svg style="left:289px;top:577px" width="16" height="16" viewBox="0 0 16 16"><use href="#newdir"/></svg>
<div class="t" style="left:309px;top:580px;">F7 Create Directory</div>
<svg style="left:411px;top:577px" width="16" height="16" viewBox="0 0 16 16"><use href="#delx"/></svg>
<div class="t" style="left:430px;top:580px;">F8 Delete</div>
<svg style="left:484px;top:577px" width="16" height="16" viewBox="0 0 16 16"><use href="#props"/></svg>
<div class="t" style="left:503px;top:580px;">F9 Properties</div>
<svg style="left:575px;top:577px" width="16" height="16" viewBox="0 0 16 16"><use href="#quit"/></svg>
<div class="t" style="left:594px;top:580px;">F10 Quit</div>
<div style="left:0px;top:599px;width:849px;height:1px;background:#C8C4BC"></div>
<div style="left:4px;top:601px;width:842px;height:1px;background:#F2F0EC"></div>
<div style="left:4px;top:620px;width:842px;height:1px;background:#F2F0EC"></div>
<div style="left:4px;top:601px;width:1px;height:20px;background:#F2F0EC"></div>
<div style="left:622px;top:601px;width:1px;height:20px;background:#F2F0EC"></div>
<div style="left:625px;top:601px;width:1px;height:20px;background:#F2F0EC"></div>
<div style="left:657px;top:601px;width:1px;height:20px;background:#F2F0EC"></div>
<div style="left:660px;top:601px;width:1px;height:20px;background:#F2F0EC"></div>
<div style="left:727px;top:601px;width:1px;height:20px;background:#F2F0EC"></div>
<div style="left:730px;top:601px;width:1px;height:20px;background:#F2F0EC"></div>
<div style="left:762px;top:601px;width:1px;height:20px;background:#F2F0EC"></div>
<div style="left:765px;top:601px;width:1px;height:20px;background:#F2F0EC"></div>
<svg style="left:632px;top:602px" width="16" height="16" viewBox="0 0 16 16"><use href="#lock"/></svg>
<div class="t" style="left:684px;top:605px;">FTP</div>
<svg style="left:737px;top:603px" width="16" height="16" viewBox="0 0 16 16"><use href="#computer"/></svg>
<div class="t" style="left:786px;top:605px;">0:00:25</div>
<div style="left:0px;top:623px;width:849px;height:2px;background:#404040"></div>
<svg style="left:832px;top:608px" width="14" height="14" viewBox="0 0 14 14"><path d="M13 2L2 13M13 6L6 13M13 10L10 13" stroke="#808080" stroke-width="1.2"/><path d="M13 3.2L3.2 13M13 7.2L7.2 13M13 11.2L11.2 13" stroke="#FFFFFF" stroke-width="0.8"/></svg>
<div style="left:847px;top:0px;width:1px;height:625px;background:#808080"></div>
<div style="left:848px;top:0px;width:1px;height:625px;background:#404040"></div>
</body></html>
